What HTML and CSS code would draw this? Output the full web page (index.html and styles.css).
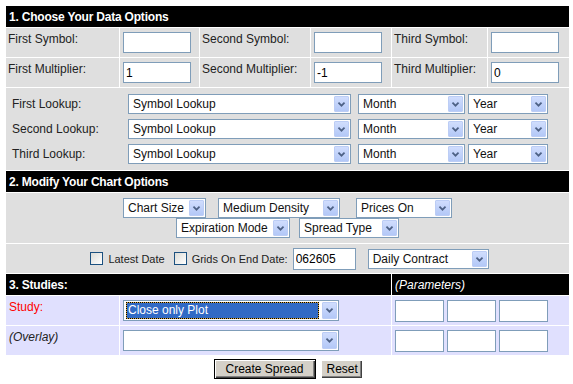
FILE: index.html
```html
<!DOCTYPE html>
<html lang="en">
<head>
  <meta charset="UTF-8" />
  <meta name="viewport" content="width=device-width, initial-scale=1" />
  <title>Spread Chart</title>
  <link rel="stylesheet" href="styles.css">
</head>
<body>
  <form class="spread">
    <table class="panel">
      <colgroup>
        <col class="c1"><col class="c2"><col class="c3"><col class="c4"><col class="c5"><col class="c6">
      </colgroup>

      <tr class="head"><td colspan="6">1. Choose Your Data Options</td></tr>
      <tr class="row">
        <td class="lbl">First Symbol:</td>
        <td class="fld"><input class="txt sym" type="text" value=""></td>
        <td class="lbl">Second Symbol:</td>
        <td class="fld"><input class="txt sym" type="text" value=""></td>
        <td class="lbl">Third Symbol:</td>
        <td class="fld"><input class="txt sym" type="text" value=""></td>
      </tr>
      <tr class="row">
        <td class="lbl">First Multiplier:</td>
        <td class="fld"><input class="txt sym" type="text" value="1"></td>
        <td class="lbl">Second Multiplier:</td>
        <td class="fld"><input class="txt sym" type="text" value="-1"></td>
        <td class="lbl">Third Multiplier:</td>
        <td class="fld"><input class="txt sym" type="text" value="0"></td>
      </tr>
      <tr class="lookups">
        <td colspan="6">
          <div class="look">
            <span class="look-lbl">First Lookup:</span>
            <div class="sel w-sym"><span class="val">Symbol Lookup</span><span class="arr"><svg viewBox="0 0 15 16"><polyline points="4,6.5 7.5,10 11,6.5"/></svg></span></div>
            <div class="sel w-month"><span class="val">Month</span><span class="arr"><svg viewBox="0 0 15 16"><polyline points="4,6.5 7.5,10 11,6.5"/></svg></span></div>
            <div class="sel w-year"><span class="val">Year</span><span class="arr"><svg viewBox="0 0 15 16"><polyline points="4,6.5 7.5,10 11,6.5"/></svg></span></div>
          </div>
          <div class="look">
            <span class="look-lbl">Second Lookup:</span>
            <div class="sel w-sym"><span class="val">Symbol Lookup</span><span class="arr"><svg viewBox="0 0 15 16"><polyline points="4,6.5 7.5,10 11,6.5"/></svg></span></div>
            <div class="sel w-month"><span class="val">Month</span><span class="arr"><svg viewBox="0 0 15 16"><polyline points="4,6.5 7.5,10 11,6.5"/></svg></span></div>
            <div class="sel w-year"><span class="val">Year</span><span class="arr"><svg viewBox="0 0 15 16"><polyline points="4,6.5 7.5,10 11,6.5"/></svg></span></div>
          </div>
          <div class="look">
            <span class="look-lbl">Third Lookup:</span>
            <div class="sel w-sym"><span class="val">Symbol Lookup</span><span class="arr"><svg viewBox="0 0 15 16"><polyline points="4,6.5 7.5,10 11,6.5"/></svg></span></div>
            <div class="sel w-month"><span class="val">Month</span><span class="arr"><svg viewBox="0 0 15 16"><polyline points="4,6.5 7.5,10 11,6.5"/></svg></span></div>
            <div class="sel w-year"><span class="val">Year</span><span class="arr"><svg viewBox="0 0 15 16"><polyline points="4,6.5 7.5,10 11,6.5"/></svg></span></div>
          </div>
        </td>
      </tr>

      <tr class="head"><td colspan="6">2. Modify Your Chart Options</td></tr>
      <tr class="chart">
        <td colspan="6">
          <div class="line">
            <div class="sel w-size"><span class="val">Chart Size</span><span class="arr"><svg viewBox="0 0 15 16"><polyline points="4,6.5 7.5,10 11,6.5"/></svg></span></div>
            <div class="sel w-dens"><span class="val">Medium Density</span><span class="arr"><svg viewBox="0 0 15 16"><polyline points="4,6.5 7.5,10 11,6.5"/></svg></span></div>
            <div class="sel w-price"><span class="val">Prices On</span><span class="arr"><svg viewBox="0 0 15 16"><polyline points="4,6.5 7.5,10 11,6.5"/></svg></span></div>
          </div>
          <div class="line">
            <div class="sel w-exp"><span class="val">Expiration Mode</span><span class="arr"><svg viewBox="0 0 15 16"><polyline points="4,6.5 7.5,10 11,6.5"/></svg></span></div>
            <div class="sel w-type"><span class="val">Spread Type</span><span class="arr"><svg viewBox="0 0 15 16"><polyline points="4,6.5 7.5,10 11,6.5"/></svg></span></div>
          </div>
        </td>
      </tr>
      <tr class="dates">
        <td colspan="6">
          <div class="date-line">
            <span class="chk"></span><span class="chk-lbl">Latest Date</span>
            <span class="chk"></span><span class="chk-lbl">Grids On End Date:</span>
            <input class="txt end" type="text" value="062605">
            <div class="sel w-daily"><span class="val">Daily Contract</span><span class="arr"><svg viewBox="0 0 15 16"><polyline points="4,6.5 7.5,10 11,6.5"/></svg></span></div>
          </div>
        </td>
      </tr>

      <tr class="head head-3">
        <td colspan="4">3. Studies:</td>
        <td colspan="2" class="params-head">(Parameters)</td>
      </tr>
      <tr class="study">
        <td class="lbl study-lbl">Study:</td>
        <td colspan="3" class="fld">
          <div class="sel w-study focus"><span class="val">Close only Plot</span><span class="arr"><svg viewBox="0 0 15 16"><polyline points="4,6.5 7.5,10 11,6.5"/></svg></span></div>
        </td>
        <td colspan="2" class="fld">
          <div class="params"><input class="txt par" type="text"><input class="txt par" type="text"><input class="txt par" type="text"></div>
        </td>
      </tr>
      <tr class="study">
        <td class="lbl overlay-lbl">(Overlay)</td>
        <td colspan="3" class="fld">
          <div class="sel w-study"><span class="val"></span><span class="arr"><svg viewBox="0 0 15 16"><polyline points="4,6.5 7.5,10 11,6.5"/></svg></span></div>
        </td>
        <td colspan="2" class="fld">
          <div class="params"><input class="txt par" type="text"><input class="txt par" type="text"><input class="txt par" type="text"></div>
        </td>
      </tr>
    </table>

    <div class="actions">
      <button type="button" class="btn btn-default">Create Spread</button>
      <button type="reset" class="btn">Reset</button>
    </div>
  </form>
</body>
</html>
```

FILE: styles.css
```css
body {
  margin: 0;
  background: #fff;
  font-family: "Liberation Sans", Arial, sans-serif;
  font-size: 12px;
  color: #222;
}

.spread {
  padding: 5px 0 0 5px;
}

.panel {
  width: 565px;
  table-layout: fixed;
  border-collapse: separate;
  border-spacing: 1px;
  background: #fff;
}

.c1 { width: 113px; }
.c2 { width: 79px; }
.c3 { width: 110px; }
.c4 { width: 80px; }
.c5 { width: 95px; }
.c6 { width: 81px; }

.panel td {
  box-sizing: border-box;
  padding: 0;
  background: #dfdfdf;
  vertical-align: middle;
}

/* Barras negras de seccion */
.head td {
  height: 21px;
  background: #000;
  color: #fff;
  font-weight: bold;
  letter-spacing: -0.2px;
  padding-left: 3px;
}

.head-3 .params-head {
  font-weight: normal;
  font-style: italic;
  letter-spacing: 0;
}

.row td {
  height: 29px;
}

.lbl {
  vertical-align: top !important;
  padding: 4px 0 0 2px !important;
  line-height: 14px;
  white-space: nowrap;
}

.fld {
  padding-left: 3px !important;
}

/* Campos de texto */
.txt {
  box-sizing: border-box;
  display: block;
  height: 21px;
  margin: 0;
  border: 1px solid #7f9db9;
  padding: 1px 2px 0;
  background: #fff;
  font: 12px "Liberation Sans", Arial, sans-serif;
  color: #000;
  outline: none;
}

.sym { width: 68px; }

/* Listas desplegables */
.sel {
  box-sizing: border-box;
  display: inline-flex;
  align-items: center;
  height: 20px;
  border: 1px solid #7f9db9;
  padding: 1px;
  background: #fff;
  color: #111;
  white-space: nowrap;
}

.sel .val {
  flex: 1;
  padding-left: 3px;
  overflow: hidden;
  line-height: 16px;
}

.sel .arr {
  box-sizing: border-box;
  flex: 0 0 15px;
  height: 16px;
  border: 1px solid #bccdf5;
  border-radius: 1px;
  background: linear-gradient(#d0ddfd, #b3c8f7);
}

.sel .arr svg {
  display: block;
  width: 13px;
  height: 14px;
}

.sel polyline {
  fill: none;
  stroke: #4d6185;
  stroke-width: 2;
}

.w-sym { width: 223px; margin-right: 7px; }
.w-month { width: 107px; margin-right: 3px; }
.w-year { width: 80px; }

.w-size { width: 83px; margin-right: 12px; }
.w-dens { width: 122px; margin-right: 16px; }
.w-price { width: 96px; }
.w-exp { width: 114px; margin-right: 9px; }
.w-type { width: 100px; }
.w-daily { width: 121px; margin-left: 12px; }

.lookups td {
  height: 82px;
  padding: 6px 0 6px 6px;
}

.look {
  display: flex;
  align-items: center;
  height: 20px;
  margin-bottom: 5px;
}

.look:last-child {
  margin-bottom: 0;
}

.look-lbl {
  flex: 0 0 116px;
}

.chart td {
  height: 50px;
  padding: 5px 0;
}

.line {
  display: flex;
  justify-content: center;
  height: 20px;
}

.dates td {
  height: 29px;
}

.date-line {
  display: flex;
  align-items: center;
  justify-content: center;
  padding-left: 4px;
}

.chk {
  box-sizing: border-box;
  width: 13px;
  height: 13px;
  border: 1px solid #1c5180;
  background: linear-gradient(135deg, #dcdcd7, #fff);
}

.chk-lbl {
  font-size: 11px;
  margin: 0 9px 0 5px;
}

.chk-lbl:last-of-type {
  margin-right: 5px;
}

.end {
  width: 63px;
  height: 22px;
}

/* Estudios */
.study td {
  height: 29px;
  background: #e0e0fe;
}

.study-lbl {
  color: #f00;
  padding-left: 3px !important;
}

.overlay-lbl {
  font-style: italic;
  padding-left: 3px !important;
}

.w-study {
  width: 216px;
  height: 21px;
}

.w-study .arr {
  height: 17px;
}

.focus .val {
  margin: 0 3px 0 1px;
  padding-left: 1px;
  border: 1px dotted #000;
  background: linear-gradient(#316ac5, #316ac5) padding-box, linear-gradient(#d6a640, #d6a640) border-box;
  color: #fff;
  line-height: 15px;
}

.params {
  display: flex;
  gap: 3px;
}

.par {
  width: 49px;
  height: 22px;
}

.actions {
  width: 565px;
  margin-top: 3px;
  text-align: center;
  font-size: 0;
}

.btn {
  box-sizing: border-box;
  height: 18px;
  margin: 0;
  padding: 0 6px;
  border: 0;
  background: #d4d0c8;
  box-shadow: inset 1px 1px #fff, inset -1px -1px #404040, inset -2px -2px #808080;
  font: 12px "Liberation Sans", Arial, sans-serif;
  color: #000;
  vertical-align: middle;
}

.btn-default {
  width: 102px;
  height: 20px;
  margin-right: 5px;
  border: 1px solid #000;
}

.btn + .btn {
  width: 41px;
}
```
